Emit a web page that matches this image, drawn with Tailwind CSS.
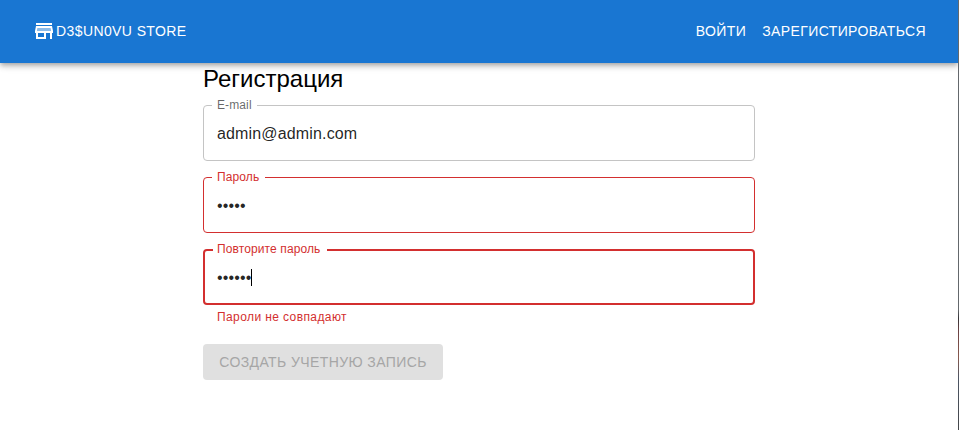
<!DOCTYPE html>
<html lang="ru">
<head>
<meta charset="utf-8">
<title>D3$UN0VU STORE</title>
<script src="https://cdn.jsdelivr.net/npm/@tailwindcss/browser@4"></script>
</head>
<body class="relative h-[430px] overflow-hidden bg-white font-['Liberation_Sans',Arial,sans-serif] text-black/87">
  <header class="relative mr-px flex h-[63px] items-center justify-between bg-[#1976d2] px-8 text-[14px] font-medium text-white shadow-[0_2px_4px_-1px_rgba(0,0,0,0.2),0_4px_5px_0_rgba(0,0,0,0.14),0_1px_10px_0_rgba(0,0,0,0.12)]">
    <a class="flex items-center tracking-[0.4px]">
      <svg class="mb-[1px] size-6" viewBox="0 0 24 24" fill="currentColor"><path opacity=".5" d="M5.64 9l-.6 3h13.92l-.6-3z"/><path d="M4 4h16v2H4zM20 7H4l-1 5v2h1v6h10v-6h4v6h2v-6h1v-2l-1-5zm-8 11H6v-4h6v4zm-6.96-6l.6-3h12.72l.6 3H5.04z"/></svg>
      D3$UN0VU STORE
    </a>
    <nav class="flex gap-4 tracking-[0.4px]">
      <a>ВОЙТИ</a>
      <a>ЗАРЕГИСТИРОВАТЬСЯ</a>
    </nav>
  </header>
  <main class="ml-[203px] w-[552px]">
    <h1 class="h-8 text-[24px] leading-8 text-black">Регистрация</h1>
    <form class="mt-[10px] flex flex-col gap-4">
      <div class="relative flex h-14 items-center rounded-[4px] border border-[#c4c4c4] px-[13px] pt-[2px] text-[16px] tracking-[0.15px]">
        <label class="absolute -top-[9px] left-[8px] w-[45px] bg-white pl-[5px] text-[12px] leading-[17px] tracking-[0.11px] text-black/60">E-mail</label>
        <span>admin@admin.com</span>
      </div>
      <div class="relative flex h-14 items-center rounded-[4px] border border-[#d32f2f] px-[13px] pt-[2px]">
        <label class="absolute -top-[9px] left-[8px] w-[53px] bg-white pl-[5px] text-[12px] leading-[17px] tracking-[0.11px] text-[#d32f2f]">Пароль</label>
        <span class="text-[16px] tracking-[0.15px]">•••••</span>
      </div>
      <div>
        <div class="relative flex h-14 items-center rounded-[4px] border-2 border-[#d32f2f] px-[12px]">
          <label class="absolute -top-[10px] left-[8px] w-[114px] bg-white pl-[4px] text-[12px] leading-[17px] tracking-[0.11px] text-[#d32f2f]">Повторите пароль</label>
          <span class="pt-[2px] text-[16px] tracking-[0.15px]">••••••</span><i class="-ml-px h-[17px] w-px bg-black"></i>
        </div>
        <p class="mb-px ml-[14px] mt-[2px] text-[12px] leading-[20px] tracking-[0.4px] text-[#d32f2f]">Пароли не совпадают</p>
      </div>
      <button type="button" class="h-9 w-[240px] rounded-[4px] bg-[#e0e0e0] text-[14px] tracking-[0.4px] text-[#a6a6a6]">СОЗДАТЬ УЧЕТНУЮ ЗАПИСЬ</button>
    </form>
  </main>
  <div class="absolute right-0 top-0 h-full w-px bg-[linear-gradient(#64686c_0_72%,#343437_74%,#6b4244_77%,#87594e_83%,#4d5664_88%,#44464a)]"></div>
</body>
</html>
